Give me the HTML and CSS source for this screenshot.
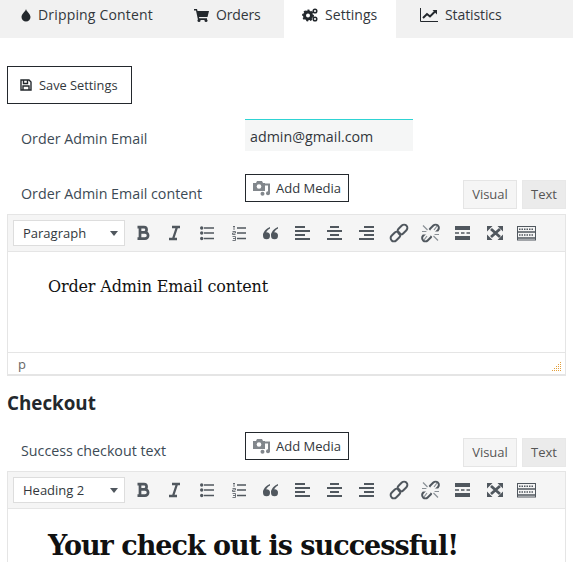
FILE: index.html
```html
<!DOCTYPE html>
<html lang="en">
<head>
<meta charset="utf-8">
<title>Settings</title>
<link rel="stylesheet" href="styles.css">
</head>
<body>
<nav class="tabs">
  <a class="tab t1"><svg class="ti" width="10" height="14" viewBox="0 0 10 14"><path d="M5 1C5.500 3.500 9.500 6 9.500 9a4.500 4.500 0 0 1-9 0C.5 6 4.500 3.500 5 1z" fill="#23282d"/></svg>Dripping Content</a>
  <a class="tab t2"><svg class="ti" width="15" height="14" viewBox="0 0 15 14"><path d="M0 1h3l.5 2H15l-1.500 6H5l.3 1.300H13V12H4L2 2.500H0z" fill="#23282d"/><circle cx="5" cy="12.500" r="1.500" fill="#23282d"/><circle cx="12" cy="12.500" r="1.500" fill="#23282d"/></svg>Orders</a>
  <a class="tab t3 active"><svg class="ti" width="16" height="14" viewBox="0 0 16 14"><circle cx="6" cy="7.500" r="3.500" fill="none" stroke="#23282d" stroke-width="3"/><circle cx="6" cy="7.500" r="5.200" fill="none" stroke="#23282d" stroke-width="1.500" stroke-dasharray="2 1.900"/><circle cx="13" cy="3" r="1.800" fill="none" stroke="#23282d" stroke-width="1.500"/><circle cx="13" cy="11" r="1.800" fill="none" stroke="#23282d" stroke-width="1.500"/></svg>Settings</a>
  <a class="tab t4"><svg class="ti" width="18" height="14" viewBox="0 0 18 14"><path d="M.5 0v13.500H18" fill="none" stroke="#23282d"/><path d="M3 10l4-4 3 2.500L15 3.500" fill="none" stroke="#23282d" stroke-width="2"/><path d="M12.500 2H17v4.500z" fill="#23282d"/></svg>Statistics</a>
</nav>

<main class="page">
  <button class="save" type="button"><svg class="si" width="12" height="12" viewBox="0 0 12 12"><path d="M1 1h8l2 2v8H1zM3.500 1.500v3h4v-3M3 11V7h6v4" fill="none" stroke="#23282d" stroke-width="1.400"/></svg>Save Settings</button>

  <div class="field">
    <label class="flabel flabel-mid">Order Admin Email</label>
    <div class="email">admin@gmail.com</div>
  </div>

  <section class="ed-block b1">
    <div class="ed-head">
      <label class="flabel">Order Admin Email content</label>
      <button class="media" type="button"><svg class="mi" width="17" height="16" viewBox="0 0 17 16"><use href="#mediaicon"/></svg>Add Media</button>
      <div class="modes"><span class="mode vis">Visual</span><span class="mode txt">Text</span></div>
    </div>
    <div class="editor">
      <div class="bar">
        <div class="fmt">Paragraph<i class="caret"></i></div>
        <svg class="tools" width="420" height="20" viewBox="0 0 420 20"><use href="#toolbar"/></svg>
      </div>
      <div class="body body1"><p class="para">Order Admin Email content</p></div>
      <div class="status"><span>p</span><svg class="grip" width="11" height="10" viewBox="0 0 11 10"><path d="M9 0h1v1H9zM7 2h1v1H7zM9 2h1v1H9zM5 4h1v1H5zM7 4h1v1H7zM9 4h1v1H9zM3 6h1v1H3zM5 6h1v1H5zM7 6h1v1H7zM9 6h1v1H9zM1 8h1v1H1zM3 8h1v1H3zM5 8h1v1H5zM7 8h1v1H7zM9 8h1v1H9z" fill="#e3a03c" shape-rendering="crispEdges"/></svg></div>
    </div>
  </section>

  <h2 class="section">Checkout</h2>

  <section class="ed-block b2">
    <div class="ed-head">
      <label class="flabel">Success checkout text</label>
      <button class="media" type="button"><svg class="mi" width="17" height="16" viewBox="0 0 17 16"><use href="#mediaicon"/></svg>Add Media</button>
      <div class="modes"><span class="mode vis">Visual</span><span class="mode txt">Text</span></div>
    </div>
    <div class="editor">
      <div class="bar">
        <div class="fmt">Heading 2<i class="caret"></i></div>
        <svg class="tools" width="420" height="20" viewBox="0 0 420 20"><use href="#toolbar"/></svg>
      </div>
      <div class="body"><h2 class="big">Your check out is successful!</h2></div>
    </div>
  </section>
</main>

<svg class="defs" width="0" height="0">
  <g id="mediaicon">
    <path d="M0 3h3l1-2h5l1 2h2v8H0z" fill="#82878c"/><circle cx="6" cy="6.500" r="2.300" fill="#fff"/>
    <path d="M11 3.500h6V13h-2V5.500h-4z" fill="#82878c"/><circle cx="15" cy="13.300" r="2" fill="#82878c"/><circle cx="9.500" cy="13.800" r="2" fill="#82878c"/>
  </g>
  <g id="toolbar" fill="none" stroke="#50575e" stroke-width="2">
    <path d="M1.500 4.200h6.500a2.600 2.600 0 0 1 0 5.200H4M4 9.400h5a3 3 0 0 1 0 6.200H1.500M4 3v13.500" stroke-width="2.700"/>
    <path d="M36 4h8M33 16h8M41 4l-4 12" stroke-width="2.300"/>
    <path d="M68 5h10M68 10h10M68 15.500h10" stroke-width="1.300"/><circle cx="65.700" cy="5" r="1.700" fill="#50575e" stroke="none"/><circle cx="65.700" cy="10" r="1.700" fill="#50575e" stroke="none"/><circle cx="65.700" cy="15.500" r="1.700" fill="#50575e" stroke="none"/>
    <path d="M101 5h9M101 10h9M101 15.500h9" stroke-width="1.300"/><path d="M97 3.500h2M98 3v4M96.500 8.500h3v1.500h-3v1.500h3M96.500 13.500h3v4h-3M97 15.500h2.500" stroke-width=".8"/>
    <path d="M134 4c-4 1.500-7 5-7 8.500h2.500c0-3 1.500-5.500 4.500-7zM142 4c-4 1.500-7 5-7 8.500h2.500c0-3 1.500-5.500 4.500-7z" fill="#50575e" stroke="none"/><circle cx="130.500" cy="12.800" r="3.500" fill="#50575e" stroke="none"/><circle cx="138.500" cy="12.800" r="3.500" fill="#50575e" stroke="none"/>
    <path d="M159 4h10M159 8h15M159 12h10M159 16h15" stroke-width="1.900"/>
    <path d="M194 4h9M191 8h15M194 12h9M191 16h15" stroke-width="1.900"/>
    <path d="M228 4h10M223 8h15M228 12h10M223 16h15" stroke-width="1.900"/>
    <rect x="254" y="10.250" width="11" height="6.500" rx="3.200" transform="rotate(-45 259.500 13.500)" stroke-width="2"/><rect x="261" y="3.250" width="11" height="6.500" rx="3.200" transform="rotate(-45 266.500 6.500)" stroke-width="2"/>
    <g transform="translate(31.500 0)"><rect x="254" y="10.250" width="11" height="6.500" rx="3.200" transform="rotate(-45 259.500 13.500)" stroke-width="2"/><rect x="261" y="3.250" width="11" height="6.500" rx="3.200" transform="rotate(-45 266.500 6.500)" stroke-width="2"/></g>
    <path d="M290 5.500l9 9M299 5.500l-9 9M287 10h15" stroke="#f5f5f5" stroke-width="3"/>
    <path d="M287 2.500l4.500 4.500M302 17.500l-4.500-4.500M301 3l-3 4M288 17l3-4M286 8.500h4M299 11.500h4" stroke-width="1.200" stroke="#8a9096"/>
    <path d="M319 5h15M319 15h15" stroke-width="4"/><path d="M319 10h4M325 10h3.500M330.500 10h3.500" stroke-width="1.400"/>
    <path d="M355 6l9 8M364 6l-9 8" stroke-width="2.800"/><path d="M351 3h5.500L351 8.500zM367 3h-5.500L367 8.500zM351 17h5.500L351 11.500zM367 17h-5.500L367 11.500z" fill="#50575e" stroke="none"/>
    <rect x="381.500" y="3.500" width="18" height="13.500" stroke-width="1"/><path d="M383 6.200h15M383 12h15" stroke-width="1.500" stroke-dasharray="1.500 1"/><path d="M382 9h17M382 15h17" stroke-width="1.700"/>
  </g>
</svg>
</body>
</html>
```
FILE: styles.css
```css
* { box-sizing: border-box; }
html, body { margin: 0; padding: 0; background: #fff; }
body { height: 562px; overflow: hidden; font-family: "Open Sans", sans-serif; color: #444; font-size: 14px; }
.defs { position: absolute; }

.tabs { display: flex; height: 38px; background: #f1f1f1; }
.tab { display: flex; align-items: flex-start; padding-top: 5px; line-height: 20px; font-size: 14px; color: #32373c; }
.ti { margin-top: 3px; margin-right: 7px; flex: none; }
.t1 { padding-left: 21px; width: 172px; letter-spacing: .17px; }
.t2 { width: 112px; padding-left: 22px; letter-spacing: -.15px; }
.t3 { width: 112px; padding-left: 18px; background: #fff; letter-spacing: .05px; }
.t4 { padding-left: 24px; letter-spacing: -.1px; }

.page { padding: 0 7px; }
.save { display: flex; align-items: center; margin: 28px 0 0; width: 125px; height: 38px; padding: 0 0 0 12px; background: #fff; border: 1px solid #23282d; font: 12.800px "Open Sans", sans-serif; color: #32373c; }
.si { margin-right: 7px; }

.field { display: flex; align-items: center; height: 32px; margin-top: 15px; }
.flabel { width: 238px; padding-left: 14px; font-size: 14.250px; color: #3c4a55; flex: none; }
.flabel-mid { padding-top: 6px; }
.email { width: 168px; height: 32px; padding: 0 5px; background: #f5f6f6; border-top: 1px solid #2ed3d3; font-size: 14.250px; line-height: 34px; color: #32373c; }

.b1 { margin-top: 23px; }
.ed-head { display: flex; align-items: flex-start; height: 40px; }
.b2 .ed-head { height: 39px; }
.ed-head .flabel { padding-top: 10px; line-height: 20px; }
.b2 .ed-head .flabel { padding-top: 9px; }
.media { display: flex; align-items: center; width: 104px; height: 28px; margin: 0; padding: 0 0 0 7px; background: #fff; border: 1px solid #23282d; font: 13px "Open Sans", sans-serif; color: #32373c; }
.mi { margin-right: 6px; flex: none; }
.modes { display: flex; gap: 5px; margin-left: auto; margin-top: 6px; font-size: 13px; }
.mode { height: 29px; line-height: 27px; text-align: center; color: #555; }
.vis { width: 54px; background: #f5f5f5; border: 1px solid #e5e5e5; }
.txt { width: 44px; background: #ebebeb; border: 1px solid #e8e8e8; }

.editor { border: 1px solid #e5e5e5; border-bottom: 0; }
.b1 .editor { border-bottom: 2px solid #e5e5e5; }
.bar { display: flex; align-items: center; height: 37px; background: #f5f5f5; border-bottom: 1px solid #e5e5e5; padding-left: 5px; }
.fmt { position: relative; width: 112px; height: 26px; background: #fff; border: 1px solid #ddd; padding-left: 9px; font-size: 13px; line-height: 24px; color: #32373c; }
.caret { position: absolute; right: 6px; top: 10px; border: 4px solid transparent; border-top: 5px solid #50575e; border-bottom: 0; }
.tools { margin-left: 11px; flex: none; }

.body { background: #fff; padding-left: 40px; overflow: hidden; }
.body1 { height: 101px; border-bottom: 1px solid #e5e5e5; }
.para { margin: 25px 0 0; font: 16px/20px "DejaVu Serif", serif; letter-spacing: -.16px; color: #111; }
.status { position: relative; height: 21px; padding-left: 10px; font-size: 13px; line-height: 22px; color: #666; }
.grip { position: absolute; right: 3px; bottom: 2px; }

.section { margin: 15px 0 0; height: 24px; font-size: 18.800px; line-height: 24px; font-weight: 700; color: #23282d; }
.b2 { margin-top: 17px; }
.big { margin: 18px 0 0; font: 700 27px/38px "DejaVu Serif", serif; letter-spacing: -1px; color: #111; white-space: nowrap; }
```
